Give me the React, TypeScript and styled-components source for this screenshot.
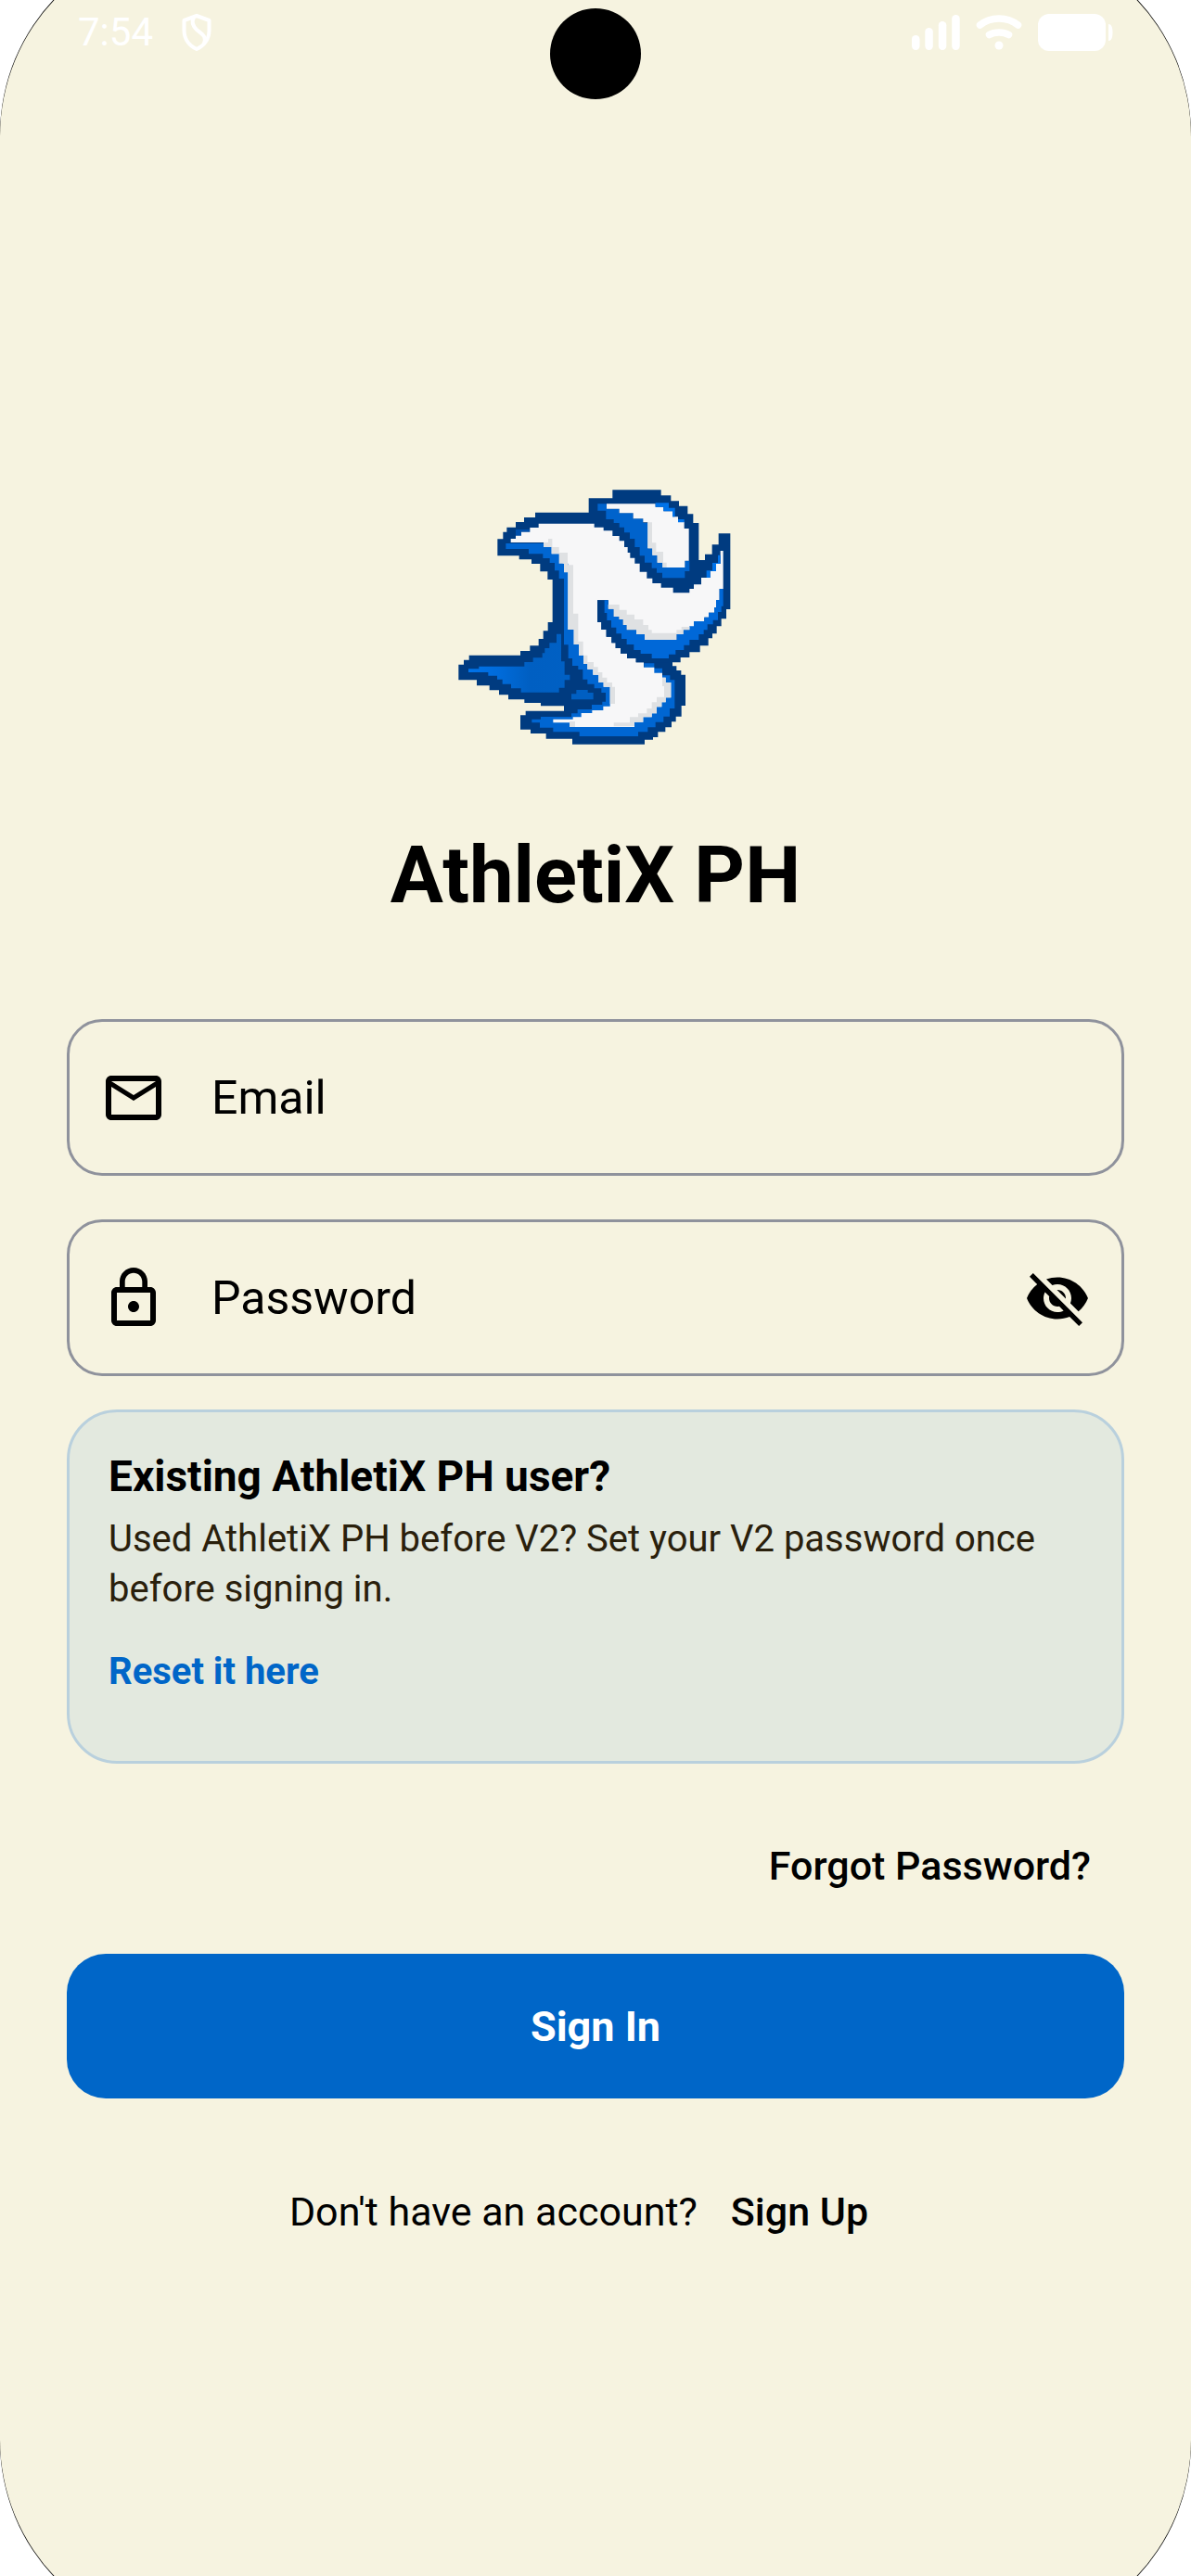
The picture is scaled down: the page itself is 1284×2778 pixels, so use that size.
import { useState } from "react";
import styled, { createGlobalStyle } from "styled-components";
import { MdLockOutline, MdOutlineEmail, MdVisibility, MdVisibilityOff } from "react-icons/md";

const GlobalStyle = createGlobalStyle`
    *, *::before, *::after {
        box-sizing: border-box;
    }
    body {
        margin: 0;
        background: #fff;
        color: #000;
        font-family: Roboto, "Liberation Sans", sans-serif;
    }
    h1, h2, p {
        margin: 0;
    }
    a {
        text-decoration: none;
    }
    button, input {
        font: inherit;
        color: inherit;
    }
`;

const Viewport = styled.div`
    min-height: 100vh;
    overflow: hidden;
`;

/* the device is taller than the window, only part of its corners shows */
const Bezel = styled.div`
    margin: -67px 0;
    background: #000;
    border-radius: 212px;
`;

const Screen = styled.div`
    position: relative;
    min-height: calc(100vh + 134px);
    padding: 67px 0;
    background: #f6f3e0;
    border-radius: 214px;
`;

const Camera = styled.div`
    position: absolute;
    top: 76px;
    left: 50%;
    width: 98px;
    height: 98px;
    margin-left: -49px;
    border-radius: 50%;
    background: #000;
`;

const StatusBar = styled.header`
    display: flex;
    justify-content: space-between;
    align-items: center;
    height: 69px;
    padding: 0 84px;
    color: #fff;
    font-size: 42px;
    line-height: 48px;
`;

const StatusGroup = styled.div<{ $gap: number }>`
    display: flex;
    align-items: center;
    gap: ${(props) => props.$gap}px;
    svg {
        display: block;
    }
`;

const Main = styled.main`
    display: flex;
    flex-direction: column;
    padding: 441px 72px 0;
`;

const Logo = styled.svg`
    width: 320px;
    height: 310px;
    align-self: center;
`;

const Title = styled.h1`
    margin: 74px 0 105px;
    font-size: 85px;
    font-weight: 700;
    line-height: 100px;
    text-align: center;
`;

const Form = styled.form`
    display: flex;
    flex-direction: column;
`;

const Fields = styled.div`
    display: grid;
    gap: 47px;
    margin-bottom: 36px;
`;

const Field = styled.div`
    display: flex;
    align-items: center;
    height: 169px;
    padding: 0 33px;
    border: 3px solid #8f929c;
    border-radius: 38px;
    svg {
        display: block;
        width: 72px;
        height: 72px;
    }
`;

const Input = styled.input`
    flex: 1;
    min-width: 0;
    height: 100%;
    margin-left: 48px;
    padding: 0;
    border: 0;
    outline: 0;
    background: none;
    font-size: 50px;
    &::placeholder {
        color: #000;
        opacity: 1;
    }
`;

const IconButton = styled.button`
    padding: 0;
    border: 0;
    background: none;
    cursor: pointer;
`;

const Notice = styled.section`
    padding: 42px;
    border: 3px solid #b9d0dd;
    border-radius: 54px;
    background: #e3e9df;
`;

const NoticeTitle = styled.h2`
    font-size: 46px;
    font-weight: 700;
    line-height: 54px;
`;

const NoticeText = styled.p`
    margin-top: 14px;
    color: #2a200c;
    font-size: 40px;
    line-height: 54px;
`;

const NoticeLink = styled.a`
    display: inline-block;
    padding: 38px 0 30px;
    color: #0066c8;
    font-size: 40px;
    font-weight: 700;
    line-height: 48px;
    vertical-align: top;
`;

const TextLink = styled.a`
    padding: 0 36px;
    color: #000;
    font-size: 43px;
    font-weight: 500;
    line-height: 48px;
`;

const ForgotRow = styled.div`
    display: flex;
    justify-content: flex-end;
    margin: 86px 0 71px;
`;

const SubmitButton = styled.button`
    height: 156px;
    border: 0;
    border-radius: 42px;
    background: #0066c8;
    color: #fff;
    font-size: 45px;
    font-weight: 700;
    cursor: pointer;
`;

const Footer = styled.p`
    display: flex;
    justify-content: center;
    margin-top: 98px;
    font-size: 43px;
    line-height: 48px;
`;

const ShieldIcon = () => (
    <svg width='34' height='42' viewBox='0 0 34 42' fill='none' stroke='#fff' strokeWidth='4' strokeLinejoin='round'>
        <path d='M17 3 L30.500 8 V19 C30.500 29 24 36 17 39 C10 36 3.500 29 3.500 19 V8 Z' />
        <path d='M14 5 C11 10 13 14 17 18 C23 23 28 25 25 33' />
    </svg>
);

const SignalIcon = () => (
    <svg width='52' height='38' viewBox='0 0 52 38' fill='#fff'>
        <rect x='0' y='22' width='8.500' height='16' rx='4.200' />
        <rect x='14.300' y='14' width='8.500' height='24' rx='4.200' />
        <rect x='28.800' y='7' width='8.500' height='31' rx='4.200' />
        <rect x='43.200' y='0' width='8.500' height='38' rx='4.200' />
    </svg>
);

const WifiIcon = () => (
    <svg width='50' height='38' viewBox='0 0 50 38' fill='none' stroke='#fff' strokeLinecap='round'>
        <path d='M4.500 11 C16 1.500 34 1.500 45.500 11' strokeWidth='7.500' />
        <path d='M14.500 21.500 C20 18 30 18 35.500 21.500' strokeWidth='7.500' />
        <circle cx='25' cy='33' r='4.500' fill='#fff' stroke='none' />
    </svg>
);

const BatteryIcon = () => (
    <svg width='81' height='40' viewBox='0 0 81 40' fill='#fff'>
        <rect width='73' height='40' rx='12' />
        <path d='M76 11 C79 11 80.500 14 80.500 20 S79 29 76 29 Z' />
    </svg>
);

const BrandLogo = () => (
    <Logo viewBox='6 0 960 930' role='img' aria-label='AthletiX PH'>
        <defs>
            <linearGradient id='wing'>
                <stop offset='0' stopColor='#0073ea' />
                <stop offset='0.3' stopColor='#006bda' />
                <stop offset='0.6' stopColor='#005fc2' />
                <stop offset='1' stopColor='#0060c4' />
            </linearGradient>
        </defs>
        {/* outline */}
        <path
            fill='#003b80'
            d='M541 55H698V73H730V91H756V107H784V133H802V162H820V282H840V263H863V232H884V196H922V441H909V472H893V496H878V520H864V535H851V559H824V580H790V597H761V613H735V625H748V639H763V653H777V753H764V788H746V805H732V823H712V838H688V855H672V863H645V878H411V860H326V843H276V830H243V784H260V770H384V754H309V744H256V733H204V718H174V703H143V688H102V670H43V620H60V605H77V590H243V576H274V559H302V537H317V511H332V483H347V345H331V319H307V294H279V280H239V268H169V214H187V191H199V176H228V159H255V144H291V128H464V82H541Z'
        />
        {/* body shade */}
        <path
            fill='#0066d2'
            d='M196 228H480V629H600L643 629V616H676V632H702V655H727V670H742V762H726V788H706V806H680V823H655V838H624V852H434V838H349V824H306V808H280V797H309V789H408V778H428V765H474V750H508V740H519V711H505V697H482V683H460V668H445V636H430V624H411V600H398V556H384V342H368V316H354V291H338V276H316V262H270V246H196Z'
        />
        <path fill='#0050ac' d='M228 183H274V191H246V203H228Z' />
        <path fill='#005fc2' d='M424 702H461V711H479V733H408V715H424Z' />
        <path
            fill='url(#wing)'
            d='M109 626H256V612H284V598H314V583H322V567H337V550H360V521H375V610H386V653H403V670H386V695H368V710H245V697H213V683H185V668H168V656H139V645H75V634H109Z'
        />
        {/* body */}
        <path
            fill='#f7f7f8'
            d='M302 164H482V176H512V187H541V204H563V220H579V240H590V258H598V275H613V293H629V320H652V341H670V357H698V371H737V388H790V375H804V361H828V339H857V318H876V294H890V252H899V375H887V411H876V436H870V452H852V467H838V480H820V492H804V508H770V522H748V540H645V522H618V508H587V492H575V474H562V465H545V440H527V412H492V483H505V507H521V530H538V550H551V567H567V584H588V600H617V613H642V629H676V647H702V662H713V678H730V727H713V742H700V757H684V778H668V790H640V806H612V822H402V808H349V797H413V790H440V777H475V768H511V755H533V692H512V678H496V653H478V635H460V618H447V590H432V555H416V507H397V293H380V262H344V240H318V225H212V213H228V203H246V191H274V177H302Z'
        />
        <path
            fill='#dfe1e3'
            d='M318 225H333V213H346V240H368V258H396V298H414V455H430V545H446V590H460V612H480V628H494V645H508V662H523V678H540V692H549V747H533V692H512V678H496V653H478V635H460V618H447V590H432V555H416V507H397V322H384V293H368V262H344V240H318Z'
        />
        <path
            fill='#dfe1e3'
            d='M702 662H713V678H730V727H713V742H700V757H684V778H668V790H640V806H612V820H545V808H597V790H624V778H652V762H668V742H684V725H708V690H702ZM402 804H420V822H402Z'
        />
        {/* dark hook that separates the arm */}
        <path
            fill='#003b80'
            d='M492 412H527V465H575V508H645V600H723V613H617V600H588V584H567V567H551V550H538V530H521V507H505V483H492Z'
        />
        {/* arm */}
        <path
            fill='#0068d8'
            d='M515 412H527V440H545V465H562V474H575V492H587V508H618V522H645V540H748V522H770V508H790V496H804V480H838V467H852V452H870V436H876V411H887V375H899V431H893V450H882V476H866V490H848V508H836V522H820V540H790V557H772V573H745V587H723V600H668V585H632V573H610V555H587V537H570V520H553V500H537V477H523V453H515Z'
        />
        <path
            fill='#dfe1e3'
            d='M527 426H563V443H587V458H612V474H640V492H657V508H668V518H748V508H764V498H790V508H770V522H748V540H645V522H618V508H587V492H575V474H562V465H545V440H527Z'
        />
        <path fill='#0073ea' d='M890 266V294H876V318H857V339H845V316H864V291H882V266Z' />
        {/* head */}
        <path
            fill='#0063cc'
            d='M493 100H522V116H563V130H608V148H640V162H655V244H670V266H686V290H703V306H775V284H790V318H775V340H702V323H684V308H668V290H645V268H629V240H613V213H597V193H579V176H563V162H545V150H520V122H493Z'
        />
        <path
            fill='#f7f7f8'
            d='M522 100H680V110H706V124H735V142H753V158H773V180H788V284H775V306H703V290H686V266H670V244H655V160H640V148H608V130H563V116H522Z'
        />
        <path fill='#dfe1e3' d='M655 160H669V226H682V255H705V290H716V306H703V290H686V266H670V244H655Z' />
        <path fill='#0073ea' d='M680 97H723V113H743V142H753V150H773V160H753V142H735V124H706V110H680Z' />
    </Logo>
);

const App = () => {
    const [showPassword, setShowPassword] = useState(false);

    return (
        <Viewport>
            <GlobalStyle />
            <Bezel>
                <Screen>
                    <Camera />
                    <StatusBar>
                        <StatusGroup $gap={30}>
                            <span>7:54</span>
                            <ShieldIcon />
                        </StatusGroup>
                        <StatusGroup $gap={17}>
                            <SignalIcon />
                            <WifiIcon />
                            <BatteryIcon />
                        </StatusGroup>
                    </StatusBar>

                    <Main>
                        <BrandLogo />
                        <Title>AthletiX PH</Title>

                        <Form onSubmit={(e) => e.preventDefault()}>
                            <Fields>
                                <Field>
                                    <label htmlFor='email' aria-label='Email'>
                                        <MdOutlineEmail />
                                    </label>
                                    <Input id='email' type='email' placeholder='Email' />
                                </Field>
                                <Field>
                                    <label htmlFor='password' aria-label='Password'>
                                        <MdLockOutline />
                                    </label>
                                    <Input
                                        id='password'
                                        type={showPassword ? "text" : "password"}
                                        placeholder='Password'
                                    />
                                    <IconButton
                                        type='button'
                                        aria-label='Show password'
                                        onClick={() => setShowPassword(!showPassword)}
                                    >
                                        {showPassword ? <MdVisibility /> : <MdVisibilityOff />}
                                    </IconButton>
                                </Field>
                            </Fields>

                            <Notice>
                                <NoticeTitle>Existing AthletiX PH user?</NoticeTitle>
                                <NoticeText>
                                    Used AthletiX PH before V2? Set your V2 password once before signing in.
                                </NoticeText>
                                <NoticeLink href='#'>Reset it here</NoticeLink>
                            </Notice>

                            <ForgotRow>
                                <TextLink href='#'>Forgot Password?</TextLink>
                            </ForgotRow>

                            <SubmitButton type='submit'>Sign In</SubmitButton>
                        </Form>

                        <Footer>
                            Don't have an account?
                            <TextLink href='#'>Sign Up</TextLink>
                        </Footer>
                    </Main>
                </Screen>
            </Bezel>
        </Viewport>
    );
};

export default App;
